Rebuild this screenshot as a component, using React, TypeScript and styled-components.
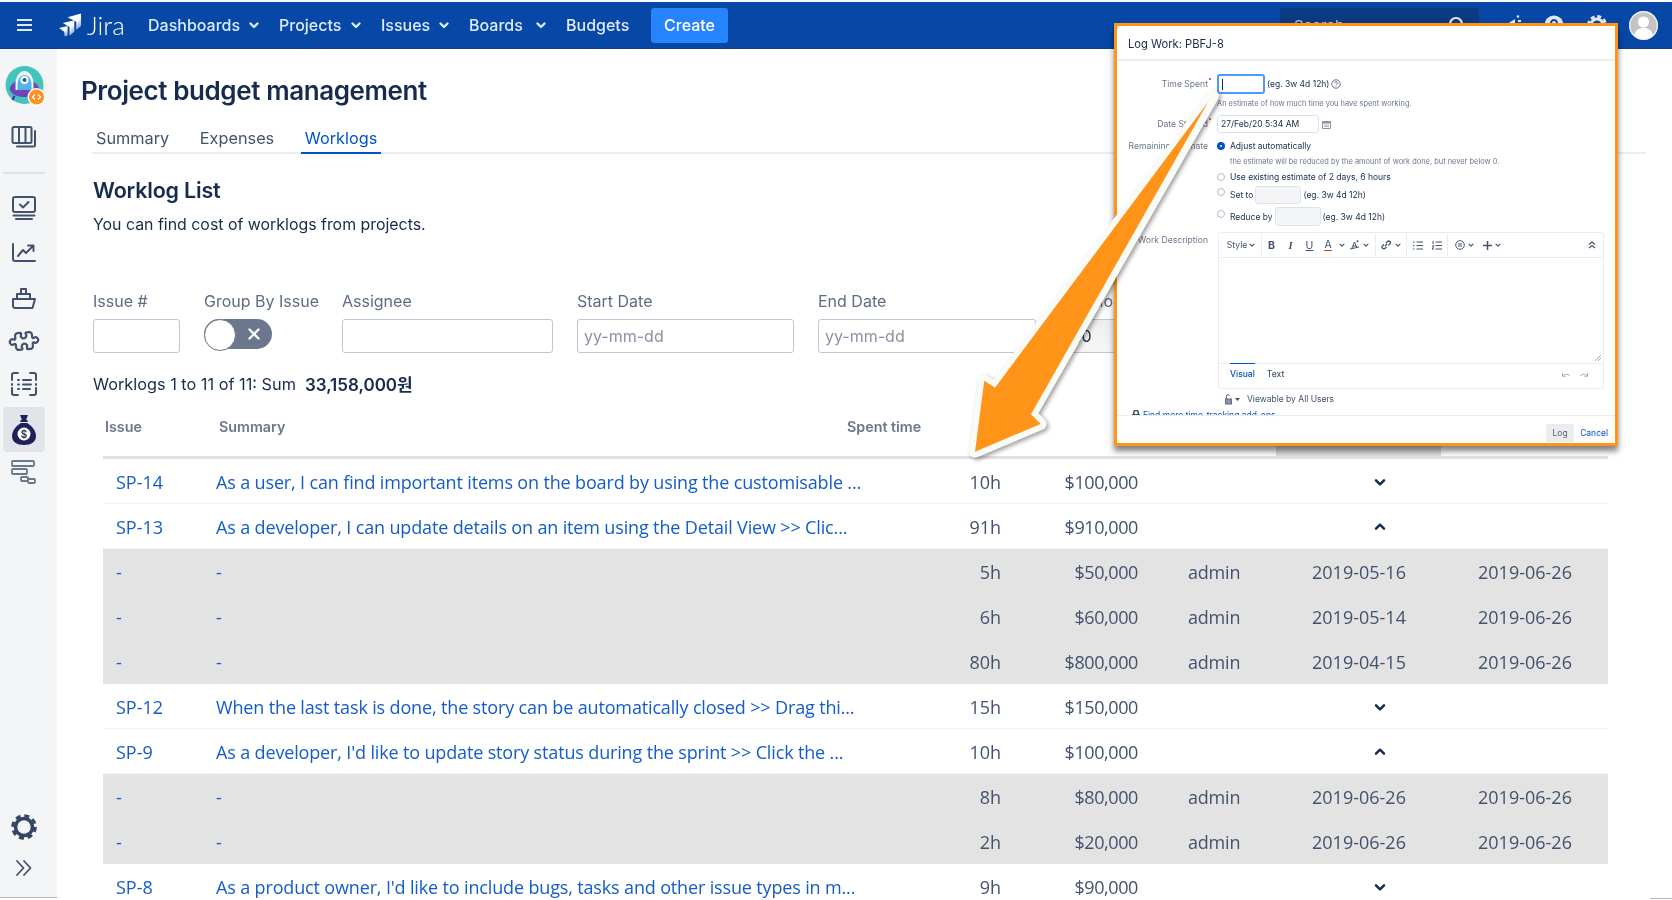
import React from "react";
import styled, { createGlobalStyle } from "styled-components";
import { Puzzle } from "lucide-react";

const Global = createGlobalStyle`
  html, body { margin: 0; padding: 0; background: #fff; }
  * { box-sizing: border-box; }
`;

const Page = styled.div`
  position: relative;
  width: 1672px;
  height: 900px;
  overflow: hidden;
  padding-top: 2px;
  background: #fff;
  font-family: Inter, "Noto Sans CJK KR", sans-serif;
  color: #172b4d;
  filter: blur(0.4px);
`;

/* ---------- top navigation ---------- */
const Nav = styled.header`
  height: 47px;
  background: #0747a6;
  display: flex;
  align-items: center;
  color: #deebff;
  border-bottom: 1px solid #0a3f90;
`;
const Burger = styled.span`
  width: 15px;
  height: 12px;
  margin-left: 17px;
  margin-right: 27px;
  border-top: 2px solid #deebff;
  border-bottom: 2px solid #deebff;
  position: relative;
  &::after {
    content: "";
    position: absolute;
    left: 0;
    right: 0;
    top: 3px;
    height: 2px;
    background: #deebff;
  }
`;
const Logo = styled.div`
  display: flex;
  align-items: center;
  width: 89px;
  color: #fff;
  font-family: Lato, sans-serif;
  font-size: 26px;
  font-weight: 300;
`;
const NavItem = styled.div<{ $w: number }>`
  width: ${(p) => p.$w}px;
  display: flex;
  align-items: center;
  justify-content: space-between;
  font-size: 16px;
  font-weight: 500;
  padding-right: 18px;
  white-space: nowrap;
  color: #deebff;
`;
const CreateButton = styled.div`
  width: 77px;
  height: 35px;
  margin-left: 22px;
  background: #2684ff;
  color: #fff;
  border-radius: 3px;
  display: flex;
  align-items: center;
  justify-content: center;
  font-size: 16px;
  font-weight: 500;
`;
const SearchBox = styled.div`
  width: 199px;
  height: 35px;
  margin-left: 552px;
  background: #0b3a80;
  border-radius: 4px;
  display: flex;
  align-items: center;
  justify-content: space-between;
  padding: 0 12px 0 14px;
  font-size: 15px;
  color: #b3c5e0;
`;
const NavIcons = styled.div`
  display: flex;
  align-items: center;
  margin-left: 23px;
  gap: 22px;
`;
const UserAvatar = styled.div`
  width: 29px;
  height: 29px;
  margin-left: 21px;
  border-radius: 50%;
  background: #f2f2f2;
  overflow: hidden;
  display: flex;
`;

/* ---------- page body ---------- */
const Body = styled.div`
  display: flex;
  height: 851px;
`;
const Side = styled.aside`
  position: relative;
  width: 57px;
  height: 849px;
  flex: none;
  background: #f4f5f7;
  border-bottom: 1px solid #b5b5b5;
  display: flex;
  flex-direction: column;
  align-items: center;
  padding: 16px 0 8px;
`;
const SideSlot = styled.div<{ $active?: boolean; $h: number }>`
  width: 42px;
  height: ${(p) => p.$h}px;
  margin-left: -9px;
  display: flex;
  align-items: center;
  justify-content: center;
  flex: none;
  border-radius: 4px;
  background: ${(p) => (p.$active ? "#e3e4e9" : "transparent")};
`;
const SideRule = styled.div`
  width: 42px;
  height: 2px;
  margin: 5px 0 10px -9px;
  background: #dfe1e6;
  flex: none;
`;
const SideSpacer = styled.div`
  flex: 1;
`;
const PuzzleIcon = styled(Puzzle)`
  transform: rotate(40deg);
  color: #42526e;
`;
const EdgeTick = styled.div`
  position: absolute;
  right: 0;
  bottom: 1px;
  width: 22px;
  height: 1px;
  background: #b5b5b5;
`;
const Main = styled.main`
  flex: 1;
  min-width: 0;
  padding: 25px 0 0 24px;
`;
const Title = styled.h1`
  margin: 0;
  font-size: 26px;
  line-height: 34px;
  font-weight: 600;
  letter-spacing: -0.4px;
  color: #172b4d;
`;
const Tabs = styled.nav`
  margin: 16px 0 0 11px;
  width: 1554px;
  height: 30px;
  display: flex;
  gap: 22.5px;
  border-bottom: 2px solid #ebecf0;
`;
const Tab = styled.div<{ $active?: boolean }>`
  height: 30px;
  padding: 0 4px;
  font-size: 16.3px;
  line-height: 28px;
  color: ${(p) => (p.$active ? "#0052cc" : "#42526e")};
  border-bottom: 2px solid ${(p) => (p.$active ? "#0052cc" : "transparent")};
`;
const Section = styled.section`
  margin: 21px 0 0 12px;
`;
const SubTitle = styled.h2`
  margin: 0;
  font-size: 21.5px;
  line-height: 30px;
  font-weight: 600;
  letter-spacing: -0.2px;
`;
const Lead = styled.p`
  margin: 8px 0 0;
  font-size: 15.9px;
  line-height: 24px;
`;
const Filters = styled.div`
  margin-top: 53px;
  display: flex;
  gap: 24px;
`;
const Field = styled.div<{ $w: number }>`
  width: ${(p) => p.$w}px;
  flex: none;
`;
const FieldLabel = styled.div`
  height: 23px;
  margin-bottom: 6px;
  font-size: 16px;
  line-height: 23px;
  color: #5e6c84;
  white-space: nowrap;
`;
const TextBox = styled.div<{ $disabled?: boolean; $ph?: boolean }>`
  height: 34px;
  border: 1.5px solid #c1c7d0;
  border-radius: 3px;
  background: ${(p) => (p.$disabled ? "linear-gradient(#eee,#f6f6f6)" : "#fff")};
  padding-left: ${(p) => (p.$disabled ? 14 : 6)}px;
  font-size: 16px;
  line-height: 33px;
  color: ${(p) => (p.$ph ? "#8993a4" : "#172b4d")};
`;
const Toggle = styled.div`
  position: relative;
  width: 68px;
  height: 30px;
  border-radius: 15px;
  background: #6b778c;
  display: flex;
  align-items: center;
  justify-content: flex-end;
  padding-right: 11px;
  &::before {
    content: "";
    position: absolute;
    left: 0;
    top: 0;
    width: 30px;
    height: 30px;
    border-radius: 50%;
    background: #fff;
    border: 1px solid #6b778c;
  }
`;
const SumLine = styled.div`
  margin-top: 19px;
  height: 24px;
  display: flex;
  align-items: center;
  gap: 9px;
  font-size: 16.3px;
`;
const SumValue = styled.strong`
  margin-top: -2px;
  font-size: 17px;
  font-weight: 600;
`;
const Table = styled.div`
  margin: 10px 0 0 10px;
  width: 1505px;
  font-family: "Open Sans", sans-serif;
  font-size: 18px;
  color: #42526e;
`;
const HeadRow = styled.div`
  height: 53px;
  display: grid;
  grid-template-columns: 114px 628px 431px 165px 1fr;
  align-items: center;
  border-bottom: 3px solid #dfe1e6;
  font-family: Inter, sans-serif;
  font-size: 14.3px;
  font-weight: 600;
  color: #6b778c;
`;
const HeadCell = styled.div<{ $sorted?: boolean }>`
  height: 100%;
  line-height: 42px;
  padding-left: 2px;
  background: ${(p) => (p.$sorted ? "#dddddd" : "transparent")};
`;
const Row = styled.div<{ $sub?: boolean }>`
  height: 45px;
  padding-top: 2px;
  display: grid;
  grid-template-columns: 113px 660px 125px 137px 174px 166px 130px;
  align-items: center;
  background: ${(p) => (p.$sub ? "#e3e3e3" : "#fff")};
  border-bottom: 1px solid ${(p) => (p.$sub ? "#e3e3e3" : "#f1f2f4")};
  white-space: nowrap;
`;
const KeyCell = styled.a`
  padding-left: 13px;
  color: #145ccb;
`;
const SummaryCell = styled.a`
  color: #145ccb;
  letter-spacing: -0.15px;
`;
const RightCell = styled.div`
  text-align: right;
`;
const CostCell = styled(RightCell)`
  letter-spacing: -0.4px;
`;
const WhoCell = styled.div`
  padding-left: 50px;
  letter-spacing: -0.2px;
`;
const ToggleCell = styled.div`
  grid-column: 6;
  padding-left: 60px;
  display: flex;
  color: #172b4d;
`;

/* ---------- log work dialog ---------- */
const Modal = styled.section`
  position: absolute;
  left: 1114px;
  top: 23px;
  width: 504px;
  height: 423px;
  z-index: 2;
  border: 3px solid #ff9419;
  background: #fff;
  display: flex;
  flex-direction: column;
  box-shadow: 0 5px 6px rgba(0, 0, 0, 0.5);
  font-size: 8.5px;
  color: #172b4d;
  filter: blur(0.25px);
`;
const ModalHead = styled.div`
  height: 35px;
  flex: none;
  padding-left: 11px;
  border-bottom: 2px solid #ebecf0;
  font-size: 11.2px;
  line-height: 36px;
`;
const ModalForm = styled.div`
  height: 355px;
  flex: none;
  overflow: hidden;
  padding-top: 13px;
  border-bottom: 1px solid #ebecf0;
`;
const FormRow = styled.div<{ $h: number; $mt?: number }>`
  display: grid;
  grid-template-columns: 100px 1fr;
  height: ${(p) => p.$h}px;
  margin-top: ${(p) => p.$mt ?? 0}px;
  align-items: center;
`;
const FormLabel = styled.div<{ $top?: boolean }>`
  position: relative;
  text-align: right;
  padding-right: 9px;
  color: #6b778c;
  font-size: 8.6px;
  align-self: ${(p) => (p.$top ? "start" : "center")};
  padding-top: ${(p) => (p.$top ? "3px" : "0")};
`;
const Star = styled.span`
  position: absolute;
  right: 6px;
  top: -1px;
  width: 2px;
  height: 2px;
  border-radius: 50%;
  background: #de350b;
`;
const FormValue = styled.div`
  display: flex;
  align-items: center;
  gap: 2px;
  white-space: nowrap;
`;
const FocusInput = styled.div`
  width: 48px;
  height: 20px;
  border: 2px solid #4c9aff;
  border-radius: 3px;
  display: flex;
  align-items: center;
  padding-left: 3px;
  &::after {
    content: "";
    width: 1px;
    height: 11px;
    background: #172b4d;
  }
`;
const DateInput = styled.div`
  width: 102px;
  height: 18px;
  border: 1px solid #dfe1e6;
  border-radius: 3px;
  padding-left: 3px;
  line-height: 16px;
  margin-right: 1px;
`;
const SmallInput = styled.div<{ $h: number }>`
  width: 46px;
  height: ${(p) => p.$h}px;
  border: 1px solid #dfe1e6;
  border-radius: 3px;
  background: #f4f5f7;
`;
const Hint = styled.div<{ $indent?: number }>`
  padding-left: ${(p) => p.$indent ?? 0}px;
  font-size: 7.45px;
  color: #6b778c;
  white-space: nowrap;
`;
const Radio = styled.span<{ $on?: boolean; $up?: number }>`
  width: 8px;
  height: 8px;
  margin-right: 3px;
  flex: none;
  border-radius: 50%;
  transform: translateY(${(p) => -(p.$up ?? 0)}px);
  background: #fff;
  border: ${(p) => (p.$on ? "3px solid #0052cc" : "1px solid #b3bac5")};
`;
const Editor = styled.div`
  height: 157px;
  width: 386px;
  margin-left: 1px;
  border: 1px solid #ebecf0;
  border-radius: 3px;
  display: flex;
  flex-direction: column;
`;
const ToolBar = styled.div`
  height: 25px;
  flex: none;
  display: flex;
  align-items: center;
  border-bottom: 1px solid #ebecf0;
  color: #42526e;
`;
const ToolGroup = styled.div<{ $w: number; $pl?: number; $last?: boolean }>`
  width: ${(p) => p.$w}px;
  height: 22px;
  padding-left: ${(p) => p.$pl ?? 0}px;
  display: flex;
  align-items: center;
  border-right: ${(p) => (p.$last ? "none" : "1px solid #ebecf0")};
`;
const Tool = styled.span<{ $w: number; $b?: boolean; $i?: boolean; $u?: boolean; $red?: boolean; $ml?: number }>`
  width: ${(p) => p.$w}px;
  flex: none;
  margin-left: ${(p) => p.$ml ?? 0}px;
  display: flex;
  align-items: center;
  justify-content: center;
  font-family: ${(p) => (p.$i ? '"Liberation Serif", serif' : "Inter, sans-serif")};
  font-size: ${(p) => (p.$b || p.$i || p.$u || p.$red ? "10.5px" : "8.6px")};
  font-weight: ${(p) => (p.$b || p.$i ? 700 : 400)};
  font-style: ${(p) => (p.$i ? "italic" : "normal")};
  text-decoration: ${(p) => (p.$u ? "underline" : "none")};
  ${(p) => (p.$red ? "border-bottom: 1.5px solid #de350b; line-height: 10px; width: 8px; margin: 0 5px;" : "")}
`;
const CollapseTool = styled.span`
  margin-left: auto;
  margin-right: 7px;
  display: flex;
`;
const TextArea = styled.div`
  position: relative;
  flex: 1;
`;
const ResizeGrip = styled.svg`
  position: absolute;
  right: 2px;
  bottom: 2px;
`;
const EditorFoot = styled.div`
  height: 25px;
  flex: none;
  border-top: 1px solid #ebecf0;
  display: flex;
  padding-left: 11px;
  gap: 12px;
`;
const ModeTab = styled.div<{ $active?: boolean }>`
  height: 20px;
  margin-top: -1px;
  line-height: 20px;
  font-weight: 500;
  color: ${(p) => (p.$active ? "#0052cc" : "#42526e")};
  border-top: ${(p) => (p.$active ? "1px solid #0052cc" : "1px solid transparent")};
`;
const History = styled.div`
  margin: 7px 14px 0 auto;
  display: flex;
  gap: 8px;
  height: 12px;
`;
const Viewable = styled.div`
  margin: 3px 0 0 107px;
  height: 14px;
  display: flex;
  align-items: center;
  color: #42526e;
  gap: 7px;
`;
const LockGroup = styled.span`
  display: flex;
  align-items: center;
  gap: 2px;
`;
const AddOns = styled.div`
  margin: 2px 0 0 15px;
  height: 14px;
  display: flex;
  align-items: center;
  gap: 3px;
  color: #0052cc;
`;
const ModalFoot = styled.div`
  flex: 1;
  display: flex;
  align-items: flex-start;
  padding: 8px 7px 0 0;
  justify-content: flex-end;
  gap: 6px;
`;
const LogButton = styled.div`
  width: 28px;
  height: 18px;
  border-radius: 2px;
  background: #ebecf0;
  color: #505f79;
  text-align: center;
  line-height: 18px;
`;
const CancelLink = styled.div`
  height: 18px;
  line-height: 18px;
  color: #0052cc;
`;
const ArrowLayer = styled.svg`
  position: absolute;
  left: 0;
  top: 0;
  z-index: 3;
  pointer-events: none;
  filter: drop-shadow(2px 2px 2px rgba(0, 0, 0, 0.38));
`;

/* ---------- drawings ---------- */
const Chev = ({ up, s = 14, c = "currentColor", w = 2.4 }: { up?: boolean; s?: number; c?: string; w?: number }) => (
  <svg width={s} height={s} viewBox="0 0 14 14" fill="none" stroke={c} strokeWidth={w} strokeLinecap="round" strokeLinejoin="round">
    <polyline points={up ? "3.5,8.5 7,5 10.5,8.5" : "3.5,5.5 7,9 10.5,5.5"} />
  </svg>
);
const Mini = () => <Chev s={8} w={2} />;

const JiraMark = () => (
  <svg width="23" height="24" viewBox="0 0 24 24" style={{ marginRight: 5 }}>
    <defs>
      <linearGradient id="jg" x1="0.1" y1="0.1" x2="0.8" y2="1">
        <stop offset="0" stopColor="#fff" />
        <stop offset="0.55" stopColor="#fff" />
        <stop offset="1" stopColor="#7fa6e0" />
      </linearGradient>
    </defs>
    <polygon fill="url(#jg)" points="9,4 23,0 23,13 18,17 18,8.5" />
    <polygon fill="url(#jg)" points="4,10 16,7 16,19 11,23 11,14" />
    <polygon fill="url(#jg)" points="0,15 9,13 9,23 6,24 5.5,19" />
  </svg>
);

const stroke = { fill: "none", stroke: "#42526e", strokeWidth: 2, strokeLinecap: "round" as const, strokeLinejoin: "round" as const };

const BotAvatar = () => (
  <svg width="42" height="42" viewBox="0 0 42 42">
    <g transform="translate(1.5 0)">
      <circle cx="20" cy="20" r="19" fill="#45c3bd" />
      <path d="M5 24c2-7 8-9 15-9s13 3 15 9c-2 6-8 8-15 8s-13-2-15-8z" fill="#6d45b8" />
      <path d="M10 31l-2 4M26 32l2 4" stroke="#45309a" strokeWidth="2" />
      <path d="M11 19c0-7 4-13 9-13s9 6 9 13v6H11z" fill="#eef7fb" />
      <path d="M13 20c0-6 3-10 7-10s7 4 7 10v5H13z" fill="#55b3e8" />
      <circle cx="20" cy="15" r="4" fill="#fff" />
      <circle cx="20" cy="15" r="2" fill="#2b5ba8" />
      <circle cx="32" cy="32" r="9" fill="#fff" />
      <circle cx="32" cy="32" r="7.6" fill="#ff8f1f" />
      <path d="M30.500 29.500L28 32l2.500 2.500M33.500 29.500L36 32l-2.500 2.500" fill="none" stroke="#fff" strokeWidth="1.4" />
    </g>
  </svg>
);
const BoardIcon = () => (
  <svg width="26" height="24" viewBox="0 0 26 24" {...stroke}>
    <rect x="1.5" y="2" width="19" height="16" rx="1.5" />
    <path d="M8 2v16M14.5 2v16M24 6v14a1.5 1.5 0 0 1-1.5 1.5H6" />
  </svg>
);
const ScreenIcon = () => (
  <svg width="26" height="26" viewBox="0 0 26 26" {...stroke}>
    <rect x="2" y="2" width="22" height="15" rx="2" />
    <path d="M9 9.5l3 3 5.5-5.5" strokeWidth="2" />
    <path d="M2.5 20.5h21M5 24h16" />
  </svg>
);
const ChartIcon = () => (
  <svg width="26" height="22" viewBox="0 0 26 22" {...stroke}>
    <path d="M2 2v15a2 2 0 0 0 2 2h20" />
    <path d="M7 14l5-6 3 3 7-7M17 3.5h5.5V9" />
  </svg>
);
const ShipIcon = () => (
  <svg width="26" height="24" viewBox="0 0 26 24" {...stroke}>
    <path d="M2 13h22l-2.5 9h-17A2.5 2.5 0 0 1 2 19.5z" />
    <path d="M6 13V8h13v5M10 8V3h5v5" />
  </svg>
);
const ListIcon = () => (
  <svg width="28" height="26" viewBox="0 0 28 26" {...stroke}>
    <path d="M8 2H4a2 2 0 0 0-2 2v5M2 13v1M2 17v5a2 2 0 0 0 2 2h4M20 2h4a2 2 0 0 1 2 2v5M26 13v1M26 17v5a2 2 0 0 1-2 2h-4" />
    <path d="M8 9h1M13 9h8M8 13.5h1M13 13.5h8M8 18h1M13 18h7" />
  </svg>
);
const BagIcon = () => (
  <svg width="26" height="30" viewBox="0 0 26 30">
    <path d="M9 0h8l-2 5h-4z" fill="#1f1f5c" />
    <rect x="9.5" y="5" width="7" height="2" fill="#1f1f5c" />
    <path d="M10 8h6c5 3 9 8 9 13 0 6-5 9-12 9S1 27 1 21c0-5 4-10 9-13z" fill="#1f1f5c" />
    <circle cx="13" cy="19" r="6.5" fill="#fff" />
    <text x="13" y="22.5" textAnchor="middle" fontFamily="Inter, sans-serif" fontSize="10" fontWeight="600" fill="#1f1f5c">$</text>
  </svg>
);
const GanttIcon = () => (
  <svg width="26" height="26" viewBox="0 0 26 26" fill="none" stroke="#6b778c" strokeWidth="1.8">
    <rect x="1" y="2" width="22" height="5" rx="1" />
    <rect x="1" y="10" width="15" height="5" rx="1" />
    <rect x="10" y="18" width="7" height="4" rx="1" />
    <rect x="17" y="20" width="7" height="4" rx="1" />
  </svg>
);
const GearIcon = () => (
  <svg width="28" height="28" viewBox="0 0 28 28" fill="none" stroke="#344563">
    <circle cx="14" cy="14" r="8.5" strokeWidth="3.6" />
    <circle cx="14" cy="14" r="11.3" strokeWidth="3" strokeDasharray="5 3.875" />
  </svg>
);
const Expand = () => (
  <svg width="20" height="18" viewBox="0 0 20 18" fill="none" stroke="#42526e" strokeWidth="1.8" strokeLinecap="round" strokeLinejoin="round">
    <path d="M3 2l6.5 7L3 16M10 2l6.5 7L10 16" />
  </svg>
);
const CloseX = () => (
  <svg width="14" height="14" viewBox="0 0 14 14" stroke="#fff" strokeWidth="2.4" strokeLinecap="round">
    <path d="M2.5 2.5l9 9M11.5 2.5l-9 9" />
  </svg>
);
const Magnifier = () => (
  <svg width="20" height="20" viewBox="0 0 20 20" fill="none" stroke="#deebff" strokeWidth="2.2">
    <circle cx="9" cy="9" r="6" />
    <path d="M14 14l4 4" />
  </svg>
);
const Megaphone = () => (
  <svg width="20" height="20" viewBox="0 0 20 20" fill="#deebff">
    <path d="M2 11l11-7v12z" />
    <path d="M15 2l2-1M16 6h3" stroke="#deebff" strokeWidth="2" />
  </svg>
);
const HelpDisc = () => (
  <svg width="20" height="20" viewBox="0 0 20 20">
    <circle cx="10" cy="10" r="9.5" fill="#deebff" />
    <path d="M7 8a3 3 0 1 1 4.5 2.6c-1 .6-1.5 1-1.5 2.4" fill="none" stroke="#0747a6" strokeWidth="2" />
  </svg>
);
const NavGear = () => (
  <svg width="22" height="22" viewBox="0 0 22 22" fill="none" stroke="#deebff">
    <circle cx="11" cy="11" r="6" strokeWidth="3" />
    <circle cx="11" cy="11" r="8.6" strokeWidth="2.6" strokeDasharray="4 2.75" />
  </svg>
);
const Person = () => (
  <svg width="29" height="29" viewBox="0 0 29 29">
    <circle cx="14.5" cy="14.5" r="14.5" fill="#c4c4c4" />
    <circle cx="14.5" cy="14.5" r="13.8" fill="none" stroke="#ececec" strokeWidth="1.4" />
    <circle cx="14.5" cy="11" r="5.6" fill="#fff" />
    <path d="M5 25c1-6 5-8 9.500-8s8.500 2 9.500 8c-2.500 2-6 3-9.500 3S7.500 27 5 25z" fill="#fff" />
  </svg>
);
const QuestionRing = () => (
  <svg width="10" height="10" viewBox="0 0 10 10" fill="none" stroke="#42526e" strokeWidth="0.8">
    <circle cx="5" cy="5" r="4.2" />
    <path d="M3.6 4a1.4 1.4 0 1 1 2 1.3c-.5.3-.6.5-.6 1M5 7.200v.4" />
  </svg>
);
const Calendar = () => (
  <svg width="9" height="9" viewBox="0 0 9 9" fill="#8993a4">
    <path d="M1 1h7a1 1 0 0 1 1 1v6a1 1 0 0 1-1 1H1a1 1 0 0 1-1-1V2a1 1 0 0 1 1-1zm0 2.500V8h7V3.500z" />
    <path d="M2 4.500h5v1H2zM2 6h5v1H2z" opacity=".7" />
  </svg>
);
const ttl = { fill: "none", stroke: "#42526e", strokeWidth: 1 };
const Bullets = () => (
  <svg width="10" height="9" viewBox="0 0 10 9" {...ttl}>
    <path d="M3.500 1H10M3.500 4.500H10M3.500 8H10M0 1h1.500M0 4.500h1.500M0 8h1.500" />
  </svg>
);
const Numbers = () => (
  <svg width="10" height="9" viewBox="0 0 10 9" {...ttl}>
    <path d="M3.500 1H10M3.500 4.500H10M3.500 8H10M1 0v3M0 5h2L0 8h2" />
  </svg>
);
const LinkTool = () => (
  <svg width="10" height="10" viewBox="0 0 10 10" {...ttl} strokeWidth="1.300">
    <path d="M4 6l2-2M3 4.500L1.500 6a1.700 1.700 0 0 0 2.400 2.400L5.500 7M5 3l1.500-1.500A1.700 1.700 0 0 1 8.900 3.900L7.500 5.500" />
  </svg>
);
const Smile = () => (
  <svg width="10" height="10" viewBox="0 0 10 10" {...ttl}>
    <circle cx="5" cy="5" r="4.300" />
    <path d="M3 4h4M3 6h4" />
  </svg>
);
const Plus = () => (
  <svg width="9" height="9" viewBox="0 0 9 9" stroke="#42526e" strokeWidth="1.500">
    <path d="M4.500 0v9M0 4.500h9" />
  </svg>
);
const ClearFmt = () => (
  <svg width="11" height="10" viewBox="0 0 11 10" {...ttl}>
    <path d="M3 8l2.500-6L8 8M4 6h3M1 9l9-2" />
    <circle cx="8.500" cy="1.200" r="1" fill="#42526e" stroke="none" />
  </svg>
);
const Collapse = () => (
  <svg width="8" height="8" viewBox="0 0 8 8" {...ttl} strokeWidth="1.200">
    <path d="M1 3.500L4 1l3 2.500M1 7L4 4.500 7 7" />
  </svg>
);
const Undo = ({ flip }: { flip?: boolean }) => (
  <svg width="10" height="8" viewBox="0 0 10 8" fill="none" stroke="#a5adba" strokeWidth="1" transform={flip ? "scale(-1 1)" : undefined}>
    <path d="M2 5a4.500 4.500 0 0 1 7 0M1.500 2v3.300h3" />
  </svg>
);
const LockIcon = () => (
  <svg width="9" height="11" viewBox="0 0 9 11" fill="none" stroke="#5e6c84" strokeWidth="1">
    <rect x="1.500" y="5" width="6" height="5" fill="#8993a4" />
    <path d="M2.500 5V2a1.500 1.500 0 0 1 3 0" />
  </svg>
);
const Caret = () => (
  <svg width="5" height="3" viewBox="0 0 5 3" fill="#42526e">
    <path d="M0 0h5L2.500 3z" />
  </svg>
);
const AddLock = () => (
  <svg width="8" height="10" viewBox="0 0 8 10" fill="#42526e">
    <path d="M1 4V2.500a3 3 0 0 1 6 0V4h1v6H0V4zm1.500 0h3V2.500a1.500 1.500 0 0 0-3 0z" />
  </svg>
);

/* ---------- data ---------- */
type Entry = { key: string; summary: string; hours: string; cost: string; who?: string; start?: string; end?: string; open?: boolean };
const rows: Entry[] = [
  { key: "SP-14", summary: "As a user, I can find important items on the board by using the customisable ...", hours: "10h", cost: "$100,000" },
  { key: "SP-13", summary: "As a developer, I can update details on an item using the Detail View >> Clic...", hours: "91h", cost: "$910,000", open: true },
  { key: "-", summary: "-", hours: "5h", cost: "$50,000", who: "admin", start: "2019-05-16", end: "2019-06-26" },
  { key: "-", summary: "-", hours: "6h", cost: "$60,000", who: "admin", start: "2019-05-14", end: "2019-06-26" },
  { key: "-", summary: "-", hours: "80h", cost: "$800,000", who: "admin", start: "2019-04-15", end: "2019-06-26" },
  { key: "SP-12", summary: "When the last task is done, the story can be automatically closed >> Drag thi...", hours: "15h", cost: "$150,000" },
  { key: "SP-9", summary: "As a developer, I'd like to update story status during the sprint >> Click the ...", hours: "10h", cost: "$100,000", open: true },
  { key: "-", summary: "-", hours: "8h", cost: "$80,000", who: "admin", start: "2019-06-26", end: "2019-06-26" },
  { key: "-", summary: "-", hours: "2h", cost: "$20,000", who: "admin", start: "2019-06-26", end: "2019-06-26" },
  { key: "SP-8", summary: "As a product owner, I'd like to include bugs, tasks and other issue types in m...", hours: "9h", cost: "$90,000" },
];

export default function App() {
  return (
    <Page>
      <Global />
      <Nav>
        <Burger />
        <Logo>
          <JiraMark />
          Jira
        </Logo>
        <NavItem $w={131}>Dashboards <Chev /></NavItem>
        <NavItem $w={102}>Projects <Chev /></NavItem>
        <NavItem $w={88}>Issues <Chev /></NavItem>
        <NavItem $w={97}>Boards <Chev /></NavItem>
        <NavItem $w={63}>Budgets</NavItem>
        <CreateButton>Create</CreateButton>
        <SearchBox>
          Search
          <Magnifier />
        </SearchBox>
        <NavIcons>
          <Megaphone />
          <HelpDisc />
          <NavGear />
        </NavIcons>
        <UserAvatar>
          <Person />
        </UserAvatar>
      </Nav>
      <Body>
        <Side>
          <SideSlot $h={42}><BotAvatar /></SideSlot>
          <SideSlot $h={60}><BoardIcon /></SideSlot>
          <SideRule />
          <SideSlot $h={47}><ScreenIcon /></SideSlot>
          <SideSlot $h={44}><ChartIcon /></SideSlot>
          <SideSlot $h={46}><ShipIcon /></SideSlot>
          <SideSlot $h={40}><PuzzleIcon size={26} strokeWidth={2} /></SideSlot>
          <SideSlot $h={46}><ListIcon /></SideSlot>
          <SideSlot $h={45} $active><BagIcon /></SideSlot>
          <SideSlot $h={40}><GanttIcon /></SideSlot>
          <SideSpacer />
          <SideSlot $h={40}><GearIcon /></SideSlot>
          <SideSlot $h={42}><Expand /></SideSlot>
        </Side>
        <Main>
          <Title>Project budget management</Title>
          <Tabs>
            <Tab>Summary</Tab>
            <Tab>Expenses</Tab>
            <Tab $active>Worklogs</Tab>
          </Tabs>
          <Section>
            <SubTitle>Worklog List</SubTitle>
            <Lead>You can find cost of worklogs from projects.</Lead>
            <Filters>
              <Field $w={87}>
                <FieldLabel>Issue #</FieldLabel>
                <TextBox />
              </Field>
              <Field $w={114}>
                <FieldLabel>Group By Issue</FieldLabel>
                <Toggle><CloseX /></Toggle>
              </Field>
              <Field $w={211}>
                <FieldLabel>Assignee</FieldLabel>
                <TextBox />
              </Field>
              <Field $w={217}>
                <FieldLabel>Start Date</FieldLabel>
                <TextBox $ph>yy-mm-dd</TextBox>
              </Field>
              <Field $w={218}>
                <FieldLabel>End Date</FieldLabel>
                <TextBox $ph>yy-mm-dd</TextBox>
              </Field>
              <Field $w={140}>
                <FieldLabel>Worklog</FieldLabel>
                <TextBox $disabled>10</TextBox>
              </Field>
            </Filters>
            <SumLine>
              Worklogs 1 to 11 of 11: Sum
              <SumValue>33,158,000원</SumValue>
            </SumLine>
            <Table>
              <HeadRow>
                <HeadCell>Issue</HeadCell>
                <HeadCell>Summary</HeadCell>
                <HeadCell>Spent time</HeadCell>
                <HeadCell $sorted />
                <HeadCell />
              </HeadRow>
              {rows.map((r, i) => (
                <Row key={i} $sub={!!r.who}>
                  <KeyCell>{r.key}</KeyCell>
                  <SummaryCell>{r.summary}</SummaryCell>
                  <RightCell>{r.hours}</RightCell>
                  <CostCell>{r.cost}</CostCell>
                  {r.who ? (
                    <>
                      <WhoCell>{r.who}</WhoCell>
                      <div>{r.start}</div>
                      <div>{r.end}</div>
                    </>
                  ) : (
                    <ToggleCell><Chev up={r.open} s={16} w={2.2} /></ToggleCell>
                  )}
                </Row>
              ))}
            </Table>
          </Section>
        </Main>
      </Body>
      <EdgeTick />

      <Modal>
        <ModalHead>Log Work: PBFJ-8</ModalHead>
        <ModalForm>
          <FormRow $h={20}>
            <FormLabel>Time Spent<Star /></FormLabel>
            <FormValue>
              <FocusInput />
              (eg. 3w 4d 12h)
              <QuestionRing />
            </FormValue>
          </FormRow>
          <FormRow $h={12} $mt={3}>
            <span />
            <Hint>An estimate of how much time you have spent working.</Hint>
          </FormRow>
          <FormRow $h={18} $mt={6}>
            <FormLabel>Date Started<Star /></FormLabel>
            <FormValue>
              <DateInput>27/Feb/20 5:34 AM</DateInput>
              <Calendar />
            </FormValue>
          </FormRow>
          <FormRow $h={14} $mt={6}>
            <FormLabel>Remaining Estimate</FormLabel>
            <FormValue><Radio $on />Adjust automatically</FormValue>
          </FormRow>
          <FormRow $h={12} $mt={2}>
            <span />
            <Hint $indent={13}>the estimate will be reduced by the amount of work done, but never below 0.</Hint>
          </FormRow>
          <FormRow $h={14} $mt={3}>
            <span />
            <FormValue><Radio />Use existing estimate of 2 days, 6 hours</FormValue>
          </FormRow>
          <FormRow $h={18} $mt={2}>
            <span />
            <FormValue><Radio $up={3} />Set to<SmallInput $h={18} />(eg. 3w 4d 12h)</FormValue>
          </FormRow>
          <FormRow $h={19} $mt={3}>
            <span />
            <FormValue><Radio $up={3} />Reduce by<SmallInput $h={19} />(eg. 3w 4d 12h)</FormValue>
          </FormRow>
          <FormRow $h={157} $mt={6}>
            <FormLabel $top>Work Description</FormLabel>
            <Editor>
              <ToolBar>
                <ToolGroup $w={43} $pl={8}>
                  <Tool $w={20}>Style</Tool>
                  <Tool $w={10}><Mini /></Tool>
                </ToolGroup>
                <ToolGroup $w={114}>
                  <Tool $w={19} $b>B</Tool>
                  <Tool $w={19} $i>I</Tool>
                  <Tool $w={19} $u>U</Tool>
                  <Tool $w={8} $red>A</Tool>
                  <Tool $w={10}><Mini /></Tool>
                  <Tool $w={14}><ClearFmt /></Tool>
                  <Tool $w={10}><Mini /></Tool>
                </ToolGroup>
                <ToolGroup $w={31} $pl={3}>
                  <Tool $w={14}><LinkTool /></Tool>
                  <Tool $w={10}><Mini /></Tool>
                </ToolGroup>
                <ToolGroup $w={41} $pl={1}>
                  <Tool $w={19}><Bullets /></Tool>
                  <Tool $w={19}><Numbers /></Tool>
                </ToolGroup>
                <ToolGroup $w={56} $pl={5} $last>
                  <Tool $w={14}><Smile /></Tool>
                  <Tool $w={8}><Mini /></Tool>
                  <Tool $w={14} $ml={5}><Plus /></Tool>
                  <Tool $w={8}><Mini /></Tool>
                </ToolGroup>
                <CollapseTool><Collapse /></CollapseTool>
              </ToolBar>
              <TextArea>
                <ResizeGrip width="6" height="6" viewBox="0 0 6 6" stroke="#a5adba" strokeWidth="1">
                  <path d="M0 6l6-6M3 6l3-3" />
                </ResizeGrip>
              </TextArea>
              <EditorFoot>
                <ModeTab $active>Visual</ModeTab>
                <ModeTab>Text</ModeTab>
                <History>
                  <Undo />
                  <Undo flip />
                </History>
              </EditorFoot>
            </Editor>
          </FormRow>
          <Viewable>
            <LockGroup><LockIcon /><Caret /></LockGroup>
            Viewable by All Users
          </Viewable>
          <AddOns><AddLock />Find more time-tracking add-ons</AddOns>
        </ModalForm>
        <ModalFoot>
          <LogButton>Log</LogButton>
          <CancelLink>Cancel</CancelLink>
        </ModalFoot>
      </Modal>

      <ArrowLayer width="1672" height="900" viewBox="0 0 1672 900">
        <polygon
          points="1213,96 1031,414.3 1040.7,424 975,451.7 984.3,380.7 995,387.7"
          fill="#fafaf7"
          stroke="#fafaf7"
          strokeWidth="12"
          strokeLinejoin="round"
        />
        <polygon points="1208.3,101.7 1031,414.3 1040.7,424 975,451.7 984.3,380.7 995,387.7" fill="#ff9419" />
      </ArrowLayer>
    </Page>
  );
}
